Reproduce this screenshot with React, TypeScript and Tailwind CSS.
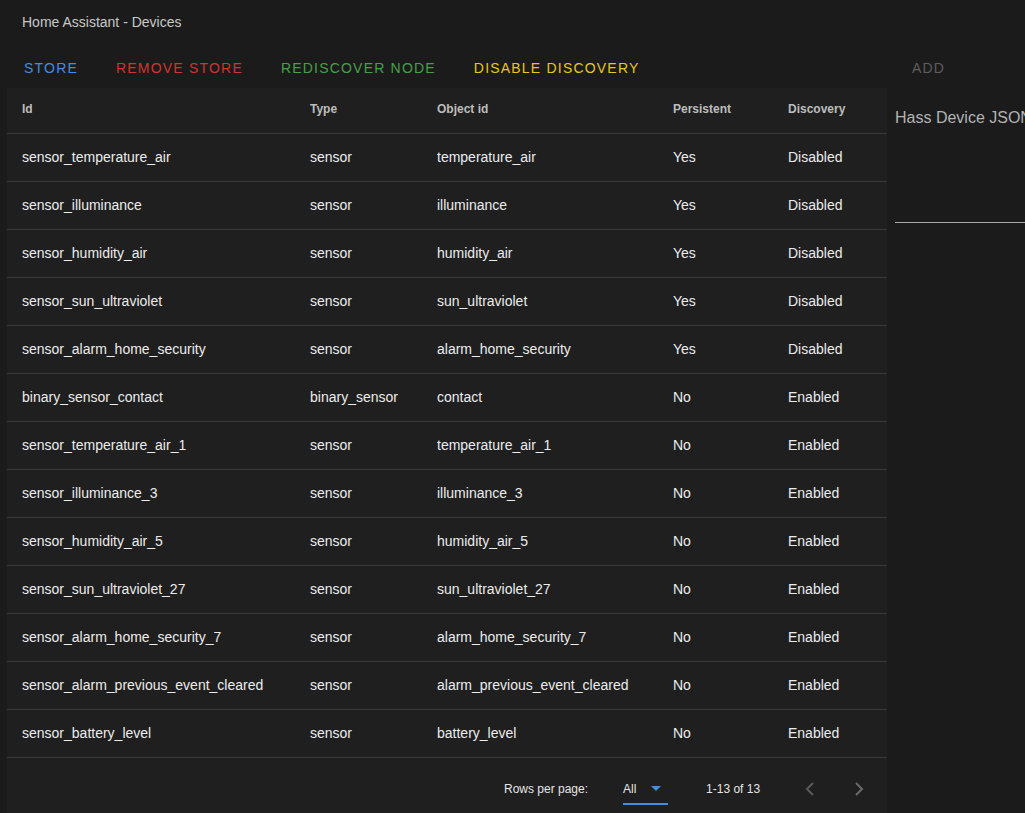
const devices = [
  ['sensor_temperature_air', 'sensor', 'temperature_air', 'Yes', 'Disabled'],
  ['sensor_illuminance', 'sensor', 'illuminance', 'Yes', 'Disabled'],
  ['sensor_humidity_air', 'sensor', 'humidity_air', 'Yes', 'Disabled'],
  ['sensor_sun_ultraviolet', 'sensor', 'sun_ultraviolet', 'Yes', 'Disabled'],
  ['sensor_alarm_home_security', 'sensor', 'alarm_home_security', 'Yes', 'Disabled'],
  ['binary_sensor_contact', 'binary_sensor', 'contact', 'No', 'Enabled'],
  ['sensor_temperature_air_1', 'sensor', 'temperature_air_1', 'No', 'Enabled'],
  ['sensor_illuminance_3', 'sensor', 'illuminance_3', 'No', 'Enabled'],
  ['sensor_humidity_air_5', 'sensor', 'humidity_air_5', 'No', 'Enabled'],
  ['sensor_sun_ultraviolet_27', 'sensor', 'sun_ultraviolet_27', 'No', 'Enabled'],
  ['sensor_alarm_home_security_7', 'sensor', 'alarm_home_security_7', 'No', 'Enabled'],
  ['sensor_alarm_previous_event_cleared', 'sensor', 'alarm_previous_event_cleared', 'No', 'Enabled'],
  ['sensor_battery_level', 'sensor', 'battery_level', 'No', 'Enabled'],
];

const headers = ['Id', 'Type', 'Object id', 'Persistent', 'Discovery'];

const cols = 'grid grid-cols-[288px_127px_236px_115px_1fr] pl-[15px] items-center';

export default function App() {
  return (
    <div
      className="w-[1025px] h-[813px] overflow-hidden bg-[#1b1b1b] text-[#e6e6e6]"
      style={{ fontFamily: '"Liberation Sans", Arial, sans-serif' }}
    >
      <div className="h-[44px] flex items-center pl-[22px] text-[14px] text-[#c8c8c8]">
        Home Assistant - Devices
      </div>

      <div className="flex">
        {/* left column: actions + table */}
        <div className="w-[880px] ml-[7px] shrink-0">
          <div className="h-[44px] pt-[4px] flex items-center gap-[38px] pl-[17px] text-[14px] tracking-[1.2px] uppercase">
            <span className="text-[#3f8ee0]">Store</span>
            <span className="text-[#d0352f]">Remove Store</span>
            <span className="text-[#45a047]">Rediscover Node</span>
            <span className="text-[#e8c81a]">Disable Discovery</span>
          </div>

          <div className="bg-[#1f1f1f]">
            <div className={`${cols} h-[46px] pb-[3px] border-b border-[#3a3a3a] text-[12px] font-bold text-[#bdbdbd]`}>
              {headers.map((h) => (
                <div key={h}>{h}</div>
              ))}
            </div>
            {devices.map((d, i) => (
              <div key={i} className={`${cols} h-[48px] border-b border-[#3a3a3a] text-[14px] text-[#ececec]`}>
                {d.map((c, j) => (
                  <div key={j}>{c}</div>
                ))}
              </div>
            ))}
            <div className="h-[56px] pt-[5px] flex items-center text-[12px] text-[#e6e6e6]">
              <span className="ml-[497px]">Rows per page:</span>
              <div className="ml-[35px] w-[45px] h-[30px] mt-[2px] flex items-center justify-between border-b-2 border-[#3f8ee0]">
                <span>All</span>
                <svg width="10" height="5" viewBox="0 0 10 5" className="mr-[7px]">
                  <path d="M0 0h10L5 5z" fill="#3f8ee0" />
                </svg>
              </div>
              <span className="ml-[38px]">1-13 of 13</span>
              <svg width="10" height="14" viewBox="0 0 10 14" className="ml-[45px]">
                <path d="M8 1L2 7l6 6" fill="none" stroke="#5a5a5a" strokeWidth="2" />
              </svg>
              <svg width="10" height="14" viewBox="0 0 10 14" className="ml-[39px]">
                <path d="M2 1l6 6-6 6" fill="none" stroke="#6a6a6a" strokeWidth="2" />
              </svg>
            </div>
          </div>
        </div>

        {/* right column: add + json field */}
        <div className="ml-[8px] w-[300px] shrink-0">
          <div className="h-[44px] pt-[4px] flex items-center pl-[17px] text-[14px] tracking-[1.2px] text-[#5e5e5e]">
            ADD
          </div>
          <div className="pt-[18px] h-[135px] border-b border-[#a8a8a8] text-[16px] text-[#b3b3b3]">
            Hass Device JSON
          </div>
        </div>
      </div>
    </div>
  );
}
